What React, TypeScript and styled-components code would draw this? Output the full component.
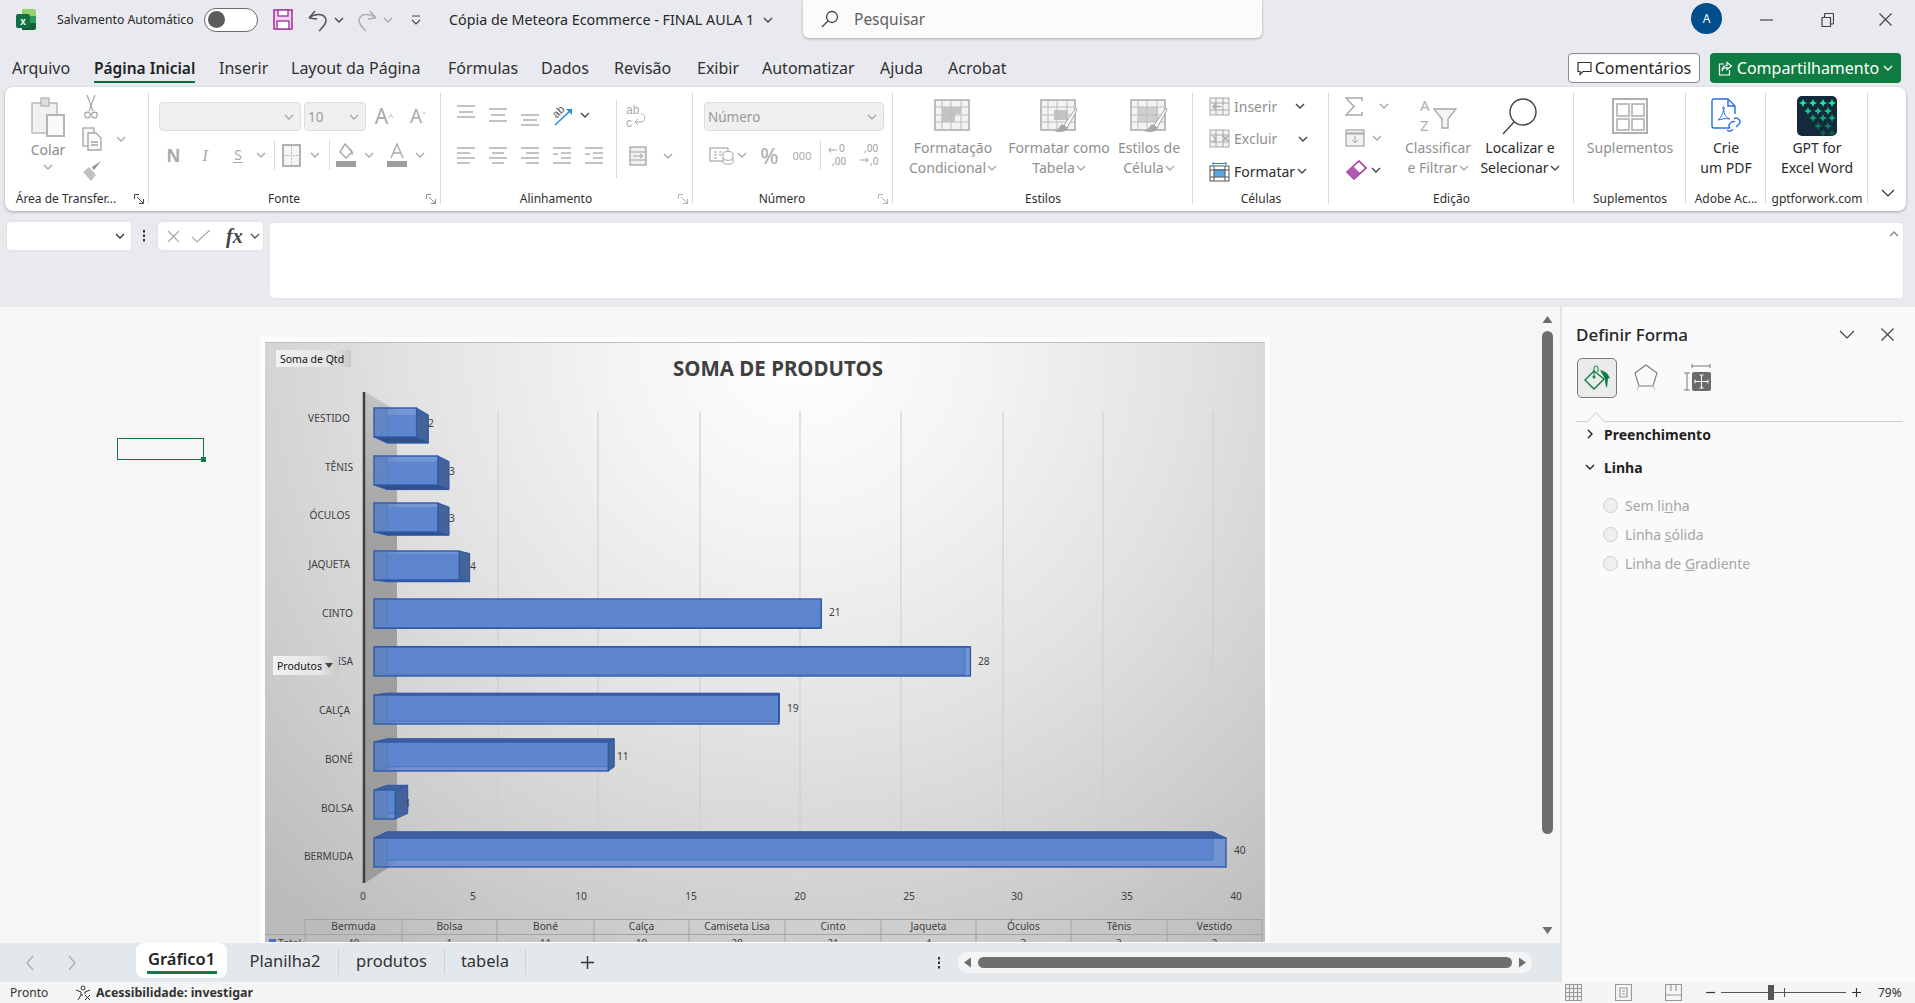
import React from 'react';
import styled, { createGlobalStyle } from 'styled-components';

const G = '#a9a9a9';
const DARK = '#444';
const FONT = `"Noto Sans", "Open Sans", sans-serif`;

const GlobalStyle = createGlobalStyle`
  html, body { margin: 0; padding: 0; background: #e8eaef; }
  body { font-family: ${FONT}; color: #262626; }
  * { box-sizing: border-box; }
`;

const Page = styled.div`
  width: 1915px;
  height: 1003px;
  overflow: hidden;
  display: flex;
  flex-direction: column;
  background: #e8eaef;
`;

/* title bar */
const TitleBar = styled.div`
  height: 39px;
  display: flex;
  align-items: center;
  padding-left: 16px;
  flex: none;
`;
const Slot = styled.span<{ $w?: number; $ml?: number; $c?: string }>`
  display: inline-flex;
  align-items: center;
  justify-content: center;
  flex: none;
  ${p => (p.$w !== undefined ? `width: ${p.$w}px;` : '')}
  margin-left: ${p => p.$ml || 0}px;
  ${p => (p.$c ? `color: ${p.$c};` : '')}
`;
const AutoSave = styled.span`
  margin-left: 21px;
  width: 137px;
  font-size: 12.2px;
  white-space: nowrap;
`;
const Toggle = styled.span`
  margin-left: 10px;
  width: 54px;
  height: 24px;
  border: 1.5px solid #6a6a6a;
  border-radius: 12px;
  background: #fff;
  display: flex;
  align-items: center;
  padding-left: 3px;
  &::before {
    content: '';
    width: 17px;
    height: 17px;
    border-radius: 50%;
    background: #5c5c5c;
  }
`;
const DocTitle = styled.span`
  margin-left: 27px;
  width: 314px;
  font-size: 14.3px;
  white-space: nowrap;
`;
const SearchBox = styled.div`
  margin-left: 30px;
  margin-top: -1px;
  width: 459px;
  height: 38px;
  background: #fbfbfb;
  border-radius: 0 0 6px 6px;
  box-shadow: 0 1px 3px rgba(0, 0, 0, 0.28);
  display: flex;
  align-items: center;
  padding-left: 18px;
  gap: 15px;
  font-size: 15.5px;
  color: #5f5f5f;
`;
const Avatar = styled.span`
  margin-left: 429px;
  width: 31px;
  height: 31px;
  margin-top: -2px;
  border-radius: 50%;
  background: #004e8c;
  color: #fff;
  font-size: 12px;
  display: flex;
  align-items: center;
  justify-content: center;
`;

/* ribbon tabs */
const TabRow = styled.div`
  height: 48px;
  flex: none;
  display: flex;
  align-items: flex-start;
  padding-top: 16px;
  position: relative;
`;
const MenuTab = styled.span<{ $w: number; $active?: boolean }>`
  width: ${p => p.$w}px;
  flex: none;
  height: 28px;
  font-size: ${p => (p.$active ? 15.5 : 16)}px;
  line-height: 27px;
  white-space: nowrap;
  color: #303030;
  ${p => p.$active ? `font-weight: 600; color: #222; border-bottom: 2.5px solid #0e6b3e; ` : ''}
`;
const MenuTabs = styled.div`
  display: flex;
  padding-left: 12px;
  flex: 1;
`;
const Gap = styled.span<{ $w: number }>`
  width: ${p => p.$w}px;
  flex: none;
`;
const CommentBtn = styled.button`
  width: 132px;
  height: 30px;
  margin-top: -2px;
  background: #fff;
  border: 1px solid #8a8a8a;
  border-radius: 4px;
  font: 16px ${FONT};
  color: #262626;
  display: flex;
  align-items: center;
  justify-content: center;
  gap: 3px;
  padding: 0;
  white-space: nowrap;
`;
const ShareBtn = styled.button`
  width: 191px;
  height: 30px;
  margin: -2px 14px 0 10px;
  background: #107c41;
  border: none;
  border-radius: 4px;
  font: 16px ${FONT};
  color: #fff;
  display: flex;
  align-items: center;
  justify-content: center;
  gap: 4px;
  padding: 0;
  white-space: nowrap;
`;

/* ribbon */
const Ribbon = styled.div`
  margin: 0 9px 0 5px;
  height: 124px;
  flex: none;
  padding: 6px 0 1px;
  display: flex;
  background: #fff;
  border-radius: 8px;
  box-shadow: 0 1px 3px rgba(0, 0, 0, 0.3);
`;
const Group = styled.section<{ $w: number }>`
  width: ${p => p.$w}px;
  flex: none;
  display: flex;
  flex-direction: column;
  position: relative;
  &::after {
    content: '';
    position: absolute;
    right: 0;
    top: 0;
    bottom: 6px;
    width: 1px;
    background: #d9d9d9;
  }
`;
const Body = styled.div<{ $pl?: number; $pt?: number }>`
  height: 94px;
  display: flex;
  padding-left: ${p => p.$pl || 0}px;
  padding-top: ${p => p.$pt || 0}px;
`;
const Footer = styled.div`
  flex: 1;
  display: flex;
  align-items: center;
`;
const GroupLabel = styled.span`
  flex: 1;
  text-align: center;
  font-size: 12px;
  white-space: nowrap;
  color: #2f2f2f;
`;
const Launcher = styled.span`
  width: 22px;
  flex: none;
  display: flex;
  justify-content: flex-end;
  padding-right: 5px;
`;
const Col = styled.div<{ $gap?: number; $ml?: number; $w?: number; $pt?: number }>`
  display: flex;
  flex-direction: column;
  gap: ${p => p.$gap || 0}px;
  margin-left: ${p => p.$ml || 0}px;
  padding-top: ${p => p.$pt || 0}px;
  ${p => (p.$w ? `width: ${p.$w}px; flex: none;` : '')}
`;
const Row = styled.div<{ $h?: number; $pl?: number }>`
  display: flex;
  align-items: center;
  ${p => (p.$h ? `height: ${p.$h}px;` : '')}
  padding-left: ${p => p.$pl || 0}px;
`;
const PasteCol = styled.div`
  width: 52px;
  flex: none;
  display: flex;
  flex-direction: column;
  align-items: center;
  padding-top: 4px;
  font-size: 14px;
  line-height: 20px;
  color: #8d8d8d;
  gap: 3px;
`;
const Combo = styled.div<{ $w: number; $ml?: number }>`
  width: ${p => p.$w}px;
  margin-left: ${p => p.$ml || 0}px;
  height: 29px;
  flex: none;
  background: #f0f0f0;
  border: 1px solid #dedede;
  border-radius: 4px;
  display: flex;
  align-items: center;
  justify-content: space-between;
  padding: 0 6px 0 3px;
  font-size: 13.5px;
  color: #9a9a9a;
`;
const Glyph = styled.span<{ $size: number; $bold?: boolean; $italic?: boolean; $serif?: boolean }>`
  font-size: ${p => p.$size}px;
  color: ${G};
  line-height: 1;
  ${p => (p.$bold ? 'font-weight: 700;' : '')}
  ${p => (p.$italic ? 'font-style: italic;' : '')}
  ${p => (p.$serif ? 'font-family: "Liberation Serif", serif;' : '')}
`;
const UnderGlyph = styled(Glyph)`
  border-bottom: 1.5px solid ${G};
  padding: 0 1px;
`;
const VSep = styled.span<{ $h: number; $ml?: number }>`
  width: 1px;
  height: ${p => p.$h}px;
  background: #d9d9d9;
  flex: none;
  margin-left: ${p => p.$ml || 0}px;
`;
const BigBtn = styled.div<{ $w?: number; $ml?: number; $off?: boolean }>`
  ${p => (p.$w ? `width: ${p.$w}px; flex: none;` : 'flex: 1;')}
  margin-left: ${p => p.$ml || 0}px;
  display: flex;
  flex-direction: column;
  align-items: center;
  font-size: 14px;
  line-height: 20px;
  white-space: nowrap;
  color: ${p => (p.$off ? '#8f8f8f' : '#2b2b2b')};
`;
const IconZone = styled.div`
  height: 45px;
  display: flex;
  align-items: center;
  justify-content: center;
`;
const CellText = styled.span<{ $w?: number; $off?: boolean }>`
  ${p => (p.$w ? `width: ${p.$w}px; flex: none;` : '')}
  margin-left: 4px;
  font-size: 14px;
  white-space: nowrap;
  color: ${p => (p.$off ? '#8f8f8f' : '#2b2b2b')};
`;
const CollapseWrap = styled.div`
  flex: 1;
  display: flex;
  align-items: flex-end;
  justify-content: center;
  padding: 0 0 12px 2px;
`;

/* formula bar */
const FormulaBar = styled.div`
  margin-top: 9px;
  height: 87px;
  flex: none;
  display: flex;
  align-items: flex-start;
  padding-left: 6px;
`;
const NameBox = styled.div`
  width: 126px;
  height: 30px;
  margin-top: 1px;
  background: #fff;
  border: 1px solid #e2e2e2;
  border-radius: 4px;
  display: flex;
  align-items: center;
  justify-content: flex-end;
  padding-right: 6px;
`;
const NameDots = styled.span`
  width: 8px;
  height: 30px;
  margin: 1px 0 0 8px;
  flex: none;
  display: flex;
  align-items: center;
  justify-content: center;
`;
const FxBox = styled.div`
  width: 107px;
  height: 30px;
  margin-top: 1px;
  margin-left: 9px;
  background: #fff;
  border: 1px solid #e2e2e2;
  border-radius: 4px;
  display: flex;
  align-items: center;
  padding-left: 9px;
`;
const FxText = styled.span`
  font-family: "Liberation Serif", serif;
  font-style: italic;
  font-weight: 700;
  font-size: 20px;
  color: #444;
`;
const FormulaInput = styled.div`
  width: 1635px;
  height: 77px;
  margin: 2px 0 0 5px;
  background: #fff;
  border: 1px solid #e4e4e4;
  border-radius: 4px;
  display: flex;
  align-items: flex-start;
  justify-content: flex-end;
  padding: 7px 4px 0 0;
`;

/* work area */
const Main = styled.div`
  flex: 1;
  min-height: 0;
  display: flex;
`;
const LeftPane = styled.div`
  width: 1560px;
  flex: none;
  display: flex;
  flex-direction: column;
`;
const Sheet = styled.div`
  flex: 1;
  min-height: 0;
  background: #f6f6f6;
  position: relative;
  overflow: hidden;
  display: flex;
  justify-content: space-between;
  padding: 30px 7px 0 260px;
`;
const SelectedCell = styled.div`
  position: absolute;
  left: 117px;
  top: 131px;
  width: 87px;
  height: 22px;
  border: 1.5px solid #107c41;
  &::after {
    content: '';
    position: absolute;
    right: -3px;
    bottom: -3px;
    width: 5px;
    height: 5px;
    background: #107c41;
  }
`;
const ChartFrame = styled.div`
  width: 1010px;
  flex: none;
  background: #fdfdfd;
  padding: 5px 5px 0;
  position: relative;
  height: 700px;
`;
const ChartSvg = styled.svg`
  display: block;
`;
const PivotBtn = styled.div<{ $l: number; $t: number; $w: number; $h: number }>`
  position: absolute;
  left: ${p => p.$l}px;
  top: ${p => p.$t}px;
  width: ${p => p.$w}px;
  height: ${p => p.$h}px;
  background: linear-gradient(90deg, #f2f2f2, #e4e4e4 70%, #c9c9c9);
  font-size: 10.5px;
  color: #111;
  display: flex;
  align-items: center;
  justify-content: space-between;
  padding: 0 6px 0 4px;
  white-space: nowrap;
`;
const VScroll = styled.div`
  width: 11px;
  flex: none;
  margin-top: -22px;
  height: 620px;
  display: flex;
  flex-direction: column;
  align-items: center;
`;
const VThumb = styled.div`
  width: 11px;
  height: 505px;
  margin: 7px 0 92px;
  border-radius: 6px;
  background: #6e6e6e;
`;

/* sheet tabs */
const SheetTabs = styled.div`
  height: 39px;
  flex: none;
  background: #e3e8ed;
  display: flex;
  align-items: flex-start;
  padding-left: 25px;
  font-size: 16.5px;
  color: #333;
`;
const ActiveTab = styled.div`
  width: 91px;
  height: 35px;
  background: #fff;
  border-radius: 8px;
  margin-left: 59px;
  display: flex;
  flex-direction: column;
  align-items: center;
  font-weight: 600;
  color: #222;
  padding-top: 4px;
`;
const ActiveLine = styled.span`
  width: 70px;
  height: 2.5px;
  background: #107c41;
  margin-top: 1px;
`;
const SheetTab = styled.div<{ $w: number; $ml?: number }>`
  width: ${p => p.$w}px;
  flex: none;
  margin-left: ${p => p.$ml || 0}px;
  margin-top: 6px;
  height: 25px;
  line-height: 24px;
  text-align: center;
  border-right: 1px solid #cfd3d7;
  white-space: nowrap;
`;
const TabNav = styled.div`
  height: 39px;
  display: flex;
  align-items: center;
  flex: none;
`;
const HScroll = styled.div`
  margin: 9px 0 0 17px;
  width: 574px;
  height: 21px;
  background: #f5f5f5;
  border-radius: 10px;
  display: flex;
  align-items: center;
  justify-content: space-between;
  padding: 0 5px;
`;
const HThumb = styled.div`
  width: 534px;
  height: 11px;
  border-radius: 6px;
  background: #6e6e6e;
`;

/* side panel */
const Panel = styled.aside`
  width: 355px;
  flex: none;
  background: #fafafa;
  border-left: 2px solid #e4e4e4;
  padding: 13px 21px 0 14px;
  display: flex;
  flex-direction: column;
`;
const PanelHead = styled.div`
  height: 28px;
  display: flex;
  align-items: center;
  font-size: 17px;
  font-weight: 500;
  color: #262626;
`;
const PanelTitle = styled.span`
  flex: 1;
`;
const PanelIcons = styled.div`
  margin-top: 10px;
  display: flex;
  align-items: center;
  padding-left: 1px;
`;
const ActiveIcon = styled.div`
  width: 40px;
  height: 40px;
  background: #ebebeb;
  border: 1px solid #7a7a7a;
  border-radius: 5px;
  display: flex;
  align-items: center;
  justify-content: center;
`;
const PanelDivider = styled.div`
  margin-top: 7px;
  height: 11px;
  width: 327px;
  flex: none;
`;
const SectionHead = styled.div<{ $mt: number }>`
  margin-top: ${p => p.$mt}px;
  height: 20px;
  display: flex;
  align-items: center;
  font-size: 14px;
  font-weight: 700;
  color: #222;
  padding-left: 9px;
  gap: 9px;
`;
const RadioRow = styled.div<{ $mt: number }>`
  margin-top: ${p => p.$mt}px;
  height: 20px;
  display: flex;
  align-items: center;
  padding-left: 27px;
  gap: 7px;
  font-size: 14px;
  color: #a6a6a6;
`;
const RadioDot = styled.span`
  width: 15px;
  height: 15px;
  border-radius: 50%;
  background: #efefef;
  border: 1px solid #cfcfcf;
`;

/* status bar */
const StatusBar = styled.div`
  height: 21px;
  flex: none;
  background: #f5f5f5;
  display: flex;
  align-items: center;
  padding-left: 10px;
  font-size: 12px;
  color: #333;
`;
const StatusStrong = styled.span`
  font-weight: 700;
  margin-left: 4px;
  width: 158px;
  white-space: nowrap;
  font-size: 12.4px;
`;
const StatusLeft = styled.span`
  width: 65px;
  flex: none;
`;
const ZoomTrack = styled.div`
  width: 125px;
  height: 1px;
  background: #555;
  margin: 0 6px;
  position: relative;
  &::before {
    content: '';
    position: absolute;
    left: 47px;
    top: -7px;
    width: 6px;
    height: 15px;
    background: #555;
  }
  &::after {
    content: '';
    position: absolute;
    left: 63px;
    top: -4px;
    width: 1px;
    height: 9px;
    background: #555;
  }
`;

/* small icons */
const Chev = ({ ml = 0, c = G, dir = 'down' }: { ml?: number; c?: string; dir?: string }) => (
  <Slot $ml={ml} $w={10}>
    <svg width="10" height="8" viewBox="0 0 10 8">
      <polyline
        points={dir === 'up' ? '1,6 5,2 9,6' : '1,2 5,6 9,2'}
        fill="none"
        stroke={c}
        strokeWidth="1.4"
      />
    </svg>
  </Slot>
);

const LineIcon = ({ lines, h = 24, w = 18 }: { lines: number[][]; h?: number; w?: number }) => (
  <svg width={w} height={h}>
    {lines.map(([a, b, y], i) => (
      <line key={i} x1={a} x2={b} y1={y} y2={y} stroke={G} strokeWidth="1.4" />
    ))}
  </svg>
);

const LauncherIcon = ({ c = '#8a8a8a' }: { c?: string }) => (
  <svg width="10" height="10" viewBox="0 0 10 10" fill="none" stroke={c}>
    <path d="M.5 5V.5H5M3 3l6 6M9.500 5v4.500H5" />
  </svg>
);

const ExcelLogo = () => (
  <svg width="20" height="21" viewBox="0 0 20 21">
    <path d="M6 0h12a2 2 0 0 1 2 2v5H6z" fill="#8fd16c" />
    <rect x="6" y="7" width="14" height="7" fill="#2b9b5a" />
    <path d="M6 14h14v5a2 2 0 0 1-2 2H6z" fill="#185c37" />
    <rect x="0" y="5" width="14" height="14" rx="2" fill="#107040" />
    <text x="7" y="16" textAnchor="middle" fontSize="10" fontWeight="700" fill="#fff" fontFamily="Liberation Sans">x</text>
  </svg>
);

const SaveIcon = () => (
  <svg width="20" height="21" viewBox="0 0 20 21">
    <rect x="1" y="1" width="18" height="19" fill="#f3d2ee" stroke="#a2399f" strokeWidth="1.6" />
    <rect x="5" y="1" width="10" height="6" fill="#fff" stroke="#a2399f" strokeWidth="1.4" />
    <rect x="4" y="12" width="12" height="8" fill="#fff" stroke="#a2399f" strokeWidth="1.4" />
  </svg>
);

const UndoIcon = ({ c, flip }: { c: string; flip?: boolean }) => (
  <svg width="20" height="24" viewBox="0 0 20 24" fill="none" stroke={c} strokeWidth="1.5" style={flip ? { transform: 'scaleX(-1)' } : undefined}>
    <path d="M1 10l6-7M1 10l8 1M1 10c6-5 16-5 17 2 .5 4-3 7-7 11" />
  </svg>
);

const PasteIcon = () => (
  <svg width="34" height="40" viewBox="0 0 34 40" fill="none" stroke="#b5b5b5" strokeWidth="1.4">
    <rect x="1" y="6" width="25" height="30" fill="#f1f1f1" />
    <rect x="10" y="1" width="8" height="8" fill="#ddd" />
    <rect x="16" y="18" width="17" height="21" fill="#fafafa" strokeWidth="2" />
  </svg>
);

const CutIcon = () => (
  <svg width="14" height="24" viewBox="0 0 14 24" fill="none" stroke="#a5a5a5" strokeWidth="1.2">
    <path d="M3 0l6 16M11 0L5 16" />
    <circle cx="3.500" cy="20" r="2.800" />
    <circle cx="10.500" cy="20" r="2.800" />
  </svg>
);

const CopyIcon = () => (
  <svg width="20" height="24" viewBox="0 0 20 24" fill="none" stroke="#a5a5a5" strokeWidth="1.3">
    <rect x="1" y="1" width="11" height="18" fill="#fafafa" />
    <path d="M6 6h8l5 5v12H6z" fill="#fafafa" />
    <path d="M9 15h7M9 18h7" />
  </svg>
);

const BrushIcon = () => (
  <svg width="20" height="22" viewBox="0 0 20 22">
    <path d="M1 12l8 9 5-6-7-8z" fill="#c2c2c2" />
    <path d="M12 10l7-9-9 6z" fill="#8e8e8e" />
  </svg>
);

const BorderIcon = () => (
  <svg width="19" height="23" viewBox="0 0 19 23" fill="none">
    <rect x="1" y="1" width="17" height="21" stroke="#9a9a9a" strokeWidth="1.5" fill="#f5f5f5" />
    <path d="M9.500 2v19M2 11.500h15" stroke="#bbb" strokeDasharray="2 1" />
  </svg>
);

const FillIcon = () => (
  <svg width="20" height="24" viewBox="0 0 20 24">
    <path d="M9 1l7 8-6 6-6-6z" fill="none" stroke="#a5a5a5" strokeWidth="1.4" />
    <path d="M14 4l3 6-1 3z" fill="#a5a5a5" />
    <rect x="0" y="18" width="20" height="6" fill="#9e9e9e" />
  </svg>
);

const TextColorIcon = () => (
  <svg width="20" height="24" viewBox="0 0 20 24" fill="none">
    <path d="M4 15L10 1l6 14M6.500 10h7" stroke="#a5a5a5" strokeWidth="1.3" />
    <rect x="0" y="18" width="20" height="6" fill="#9e9e9e" />
  </svg>
);

const OrientIcon = () => (
  <svg width="22" height="24" viewBox="0 0 22 24" fill="none">
    <text x="1" y="13" fontSize="11" fill="#555" transform="rotate(-45 6 10)" fontFamily="Liberation Sans">ab</text>
    <path d="M3 22L19 7" stroke="#2c8fd6" strokeWidth="1.6" />
    <path d="M14 6h6v6z" fill="#2c8fd6" />
  </svg>
);

const WrapIcon = () => (
  <svg width="20" height="24" viewBox="0 0 20 24" fill="none">
    <text x="0" y="10" fontSize="12" fill="#aaa" fontFamily="Liberation Sans">ab</text>
    <text x="0" y="23" fontSize="12" fill="#aaa" fontFamily="Liberation Sans">c</text>
    <path d="M15 10c5 0 5 8 0 8H10M12 15l-3 3 3 3" stroke="#aaa" />
  </svg>
);

const MergeIcon = () => (
  <svg width="18" height="20" viewBox="0 0 18 20" fill="none" stroke="#a5a5a5">
    <rect x="1" y="1" width="16" height="18" fill="#f0f0f0" strokeWidth="1.3" />
    <path d="M1 6h16M1 14h16M4 10h10M11 8l2.500 2-2.500 2" />
  </svg>
);

const AccountingIcon = () => (
  <svg width="26" height="20" viewBox="0 0 26 20" fill="none" stroke="#a5a5a5">
    <rect x="1" y="3" width="18" height="13" strokeWidth="1.2" />
    <path d="M5 7h3M5 10h3M5 13h3M10 7h3M10 10h3" />
    <ellipse cx="19" cy="9" rx="5" ry="2.500" fill="#fff" />
    <path d="M14 9v8c0 3 10 3 10 0V9M14 13c0 3 10 3 10 0" fill="#fff" />
  </svg>
);

const DecimalIcon = ({ inc }: { inc?: boolean }) => (
  <svg width="20" height="26" viewBox="0 0 20 26" fill="none">
    <text x={inc ? 11 : 5} y="10" fontSize="10" fill="#a0a0a0" fontFamily="Noto Sans">{inc ? '0' : ',00'}</text>
    <text x={inc ? 4 : 11} y="23" fontSize="10" fill="#a0a0a0" fontFamily="Noto Sans">{inc ? ',00' : ',0'}</text>
    <path d={inc ? 'M1 8h8M3 5.500L1 8l2 2.500' : 'M1 18h8M7 15.500L9 18l-2 2.500'} stroke="#a0a0a0" />
  </svg>
);

const StyleGrid = ({ variant, brush }: { variant: number; brush?: boolean }) => (
  <svg width="38" height="34" viewBox="0 0 38 34" fill="none">
    <rect x="1" y="1" width="34" height="30" stroke="#a8a8a8" strokeWidth="1.5" fill="#f3f3f3" />
    {variant === 0 && <path d="M8 8h13v8h-9v7h-4zM21 8h6v7h-6zM12 16h9v7h-9z" fill="#c4c4c4" />}
    {variant === 1 && <path d="M14 11h14v10H14z" fill="#c4c4c4" />}
    {variant === 2 && <path d="M8 8h20v15H8z" fill="#cfcfcf" />}
    <path d="M1 8h34M1 23h34M8 1v30M27 1v30M1 16h34M17 1v30" stroke="#bdbdbd" />
    {brush && (
      <>
        <path d="M36 9L24 26l3 3L37 11z" fill="#fff" stroke="#a0a0a0" />
        <path d="M22 25c-2 2-4 6-8 7 6 2 12 1 14-3z" fill="#a8a8a8" />
      </>
    )}
  </svg>
);

const CellIcon = ({ kind }: { kind: string }) => {
  if (kind === 'fmt') {
    return (
      <svg width="21" height="21" viewBox="0 0 21 21" fill="none">
        <path d="M4 1v3M17 1v3M4 2.500h13" stroke="#2c7fd0" />
        <rect x="1" y="5" width="19" height="15" stroke="#555" fill="#fff" />
        <rect x="5" y="8" width="11" height="8" fill="#5aa7e4" />
        <path d="M1 9h19M1 16h19M5 5v15M16 5v15" stroke="#555" />
      </svg>
    );
  }
  return (
    <svg width="21" height="19" viewBox="0 0 21 19" fill="none" stroke="#a8a8a8">
      <rect x="1" y="1" width="19" height="17" fill="#f2f2f2" />
      <path d="M1 6h19M1 13h19M7 1v17M14 1v17" />
      {kind === 'ins' ? <path d="M12 9.500H4M7 6.500L4 9.500l3 3" strokeWidth="1.3" /> : <path d="M4 7l3 3-3 3M14 7l5 5M19 7l-5 5" strokeWidth="1.3" />}
    </svg>
  );
};

const SigmaIcon = () => (
  <svg width="18" height="19" viewBox="0 0 18 19" fill="none" stroke={G} strokeWidth="1.5">
    <path d="M17 4V1H1l8 8.500L1 18h16v-3" />
  </svg>
);
const FillDownIcon = () => (
  <svg width="20" height="18" viewBox="0 0 20 18" fill="none" stroke={G}>
    <rect x="1" y="1" width="18" height="16" fill="#f2f2f2" strokeWidth="1.3" />
    <path d="M1 4.500h18" strokeWidth="2" />
    <path d="M10 7v7M7 11l3 3 3-3" />
  </svg>
);
const EraserIcon = () => (
  <svg width="22" height="20" viewBox="0 0 22 20" fill="none">
    <path d="M14 1l7 7-12 11-7-7z" fill="#fff" stroke="#a2399f" strokeWidth="1.6" />
    <path d="M2 12l6-6 7 7-6 6z" fill="#b558b2" />
  </svg>
);
const SortIcon = () => (
  <svg width="38" height="36" viewBox="0 0 38 36" fill="none">
    <text x="1" y="13" fontSize="15" fill="#b0b0b0" fontFamily="Noto Sans">A</text>
    <text x="1" y="33" fontSize="15" fill="#b0b0b0" fontFamily="Noto Sans">Z</text>
    <path d="M15 11h22l-8 10v9h-6v-9z" fill="#f5f5f5" stroke="#a8a8a8" strokeWidth="1.4" />
  </svg>
);
const LensIcon = () => (
  <svg width="36" height="38" viewBox="0 0 36 38" fill="none" stroke="#444" strokeWidth="1.4">
    <circle cx="21" cy="15" r="13" />
    <path d="M12 25L1 37" />
  </svg>
);
const AddinIcon = () => (
  <svg width="36" height="36" viewBox="0 0 36 36" fill="none" stroke="#b0b0b0" strokeWidth="1.6">
    <rect x="1" y="1" width="34" height="34" strokeWidth="2" />
    <rect x="5" y="6" width="12" height="12" />
    <rect x="20" y="6" width="12" height="12" />
    <rect x="5" y="21" width="12" height="11" />
    <rect x="20" y="21" width="12" height="11" />
  </svg>
);
const PdfIcon = () => (
  <svg width="32" height="36" viewBox="0 0 32 36" fill="none" stroke="#2a6fe0" strokeWidth="1.4">
    <path d="M20 30H4a2 2 0 0 1-2-2V3a2 2 0 0 1 2-2h14l7 7v8" />
    <path d="M18 1v7h7" />
    <path d="M8 22c4-3 6-8 5-12-1-2 2-2 1 1-1 5 3 9 6 10-4-1-8 0-12 1z" strokeWidth="1" />
    <path d="M20 30c-3-3 2-8 5-6M24 21c3-3 8 2 5 5l-3 3" />
    <path d="M23 31c-1 2-4 3-6 1" />
  </svg>
);
const GptIcon = () => {
  const dots: React.ReactNode[] = [];
  [
    [6, 7, '#1de9a0'], [16, 7, '#1de9a0'], [26, 7, '#1de9a0'], [35, 7, '#1de9a0'],
    [11, 15, '#18c98c'], [21, 15, '#18c98c'], [31, 15, '#18c98c'],
    [16, 22, '#12a574'], [26, 22, '#12a574'], [35, 22, '#12a574'],
    [21, 30, '#0d7d5b'], [31, 30, '#0d7d5b'], [26, 37, '#0a6049'], [35, 37, '#0a6049'],
  ].forEach(([x, y, c], i) => {
    const a = x as number;
    const b = y as number;
    dots.push(<path key={i} d={`M${a} ${b - 4}l1.200 2.800 2.800 1.200-2.800 1.200-1.200 2.800-1.200-2.800-2.800-1.200 2.800-1.200z`} fill={c as string} />);
  });
  return (
    <svg width="40" height="40" viewBox="0 0 40 40">
      <rect width="40" height="40" rx="5" fill="#14293c" />
      {dots}
    </svg>
  );
};
const A11yIcon = () => (
  <svg width="17" height="16" viewBox="0 0 17 16" fill="none" stroke="#333" strokeWidth="1">
    <circle cx="8" cy="3" r="2" />
    <path d="M1 5l5 2v3l-3 5M15 5l-5 2v2M6 10h2" />
    <path d="M10 10l5 5M15 10l-5 5" />
  </svg>
);

/* chart */
const BARS = [
  { name: 'VESTIDO', v: 2, y: 408, ly: 418, lx: 350, dx: 428, dy: 423 },
  { name: 'TÊNIS', v: 3, y: 456, ly: 467, lx: 353, dx: 449, dy: 471 },
  { name: 'ÓCULOS', v: 3, y: 503, ly: 515, lx: 350, dx: 449, dy: 518 },
  { name: 'JAQUETA', v: 4, y: 551, ly: 564, lx: 350, dx: 470, dy: 566 },
  { name: 'CINTO', v: 21, y: 599, ly: 613, lx: 353, dx: 829, dy: 612 },
  { name: 'CAMISETA LISA', v: 28, y: 647, ly: 661, lx: 353, dx: 978, dy: 661 },
  { name: 'CALÇA', v: 19, y: 695, ly: 710, lx: 350, dx: 787, dy: 708 },
  { name: 'BONÉ', v: 11, y: 742, ly: 759, lx: 353, dx: 617, dy: 756 },
  { name: 'BOLSA', v: 1, y: 790, ly: 808, lx: 353, dx: 405, dy: 803 },
  { name: 'BERMUDA', v: 40, y: 838, ly: 856, lx: 353, dx: 1234, dy: 850 },
];
const VX = 800;
const VY = 635;
const S = 0.9695;
const toBack = (x: number, y: number): [number, number] => [VX + (x - VX) * S, VY + (y - VY) * S];

const Bar = ({ v, y }: { v: number; y: number }) => {
  const x0 = 374;
  const x1 = x0 + v * 21.3;
  const h = 29;
  const [bx0, by0] = toBack(x0, y);
  const [bx1, by1] = toBack(x1, y + h);
  const pts = (a: number[][]) => a.map(p => p.join(',')).join(' ');
  return (
    <g>
      <rect x={bx0} y={by0} width={bx1 - bx0} height={by1 - by0} fill="#4a72bc" />
      {bx1 > x1 && <polygon points={pts([[x1, y], [bx1, by0], [bx1, by1], [x1, y + h]])} fill="#44639b" stroke="#2f5aa8" />}
      {by0 < y && <polygon points={pts([[x0, y], [bx0, by0], [bx1, by0], [x1, y]])} fill="#3f5f9e" stroke="#2f5aa8" />}
      {by1 > y + h && <polygon points={pts([[x0, y + h], [bx0, by1], [bx1, by1], [x1, y + h]])} fill="#314f8a" stroke="#2f5aa8" />}
      <rect x={x0} y={y} width={x1 - x0} height={h} fill="#6189d2" fillOpacity="0.85" stroke="#2f5aa8" strokeWidth="1.4" />
      <rect x={x0 + 1} y={y + 1} width={bx0 - x0} height={h - 2} fill="#34589c" fillOpacity="0.2" />
      <polyline points={pts([[bx0, by1], [bx1, by1], [bx1, by0]])} fill="none" stroke="#2f5aa8" strokeOpacity="0.45" />
    </g>
  );
};

const GRID = [498, 598, 700, 800, 901, 1003, 1103, 1213];
const TICKS = [363, 473, 581, 691, 800, 909, 1017, 1127, 1236];
const COLS = [305, 402, 497, 594, 689, 785, 881, 976, 1071, 1167, 1262];
const HEAD = ['Bermuda', 'Bolsa', 'Boné', 'Calça', 'Camiseta Lisa', 'Cinto', 'Jaqueta', 'Óculos', 'Tênis', 'Vestido'];
const VALUES = [40, 1, 11, 19, 28, 21, 4, 3, 3, 2];

const Chart = () => (
  <ChartSvg width="1000" height="600" viewBox="265 342 1000 600" fontFamily="Noto Sans" fill="#404040">
    <defs>
      <radialGradient id="chartBg" gradientUnits="userSpaceOnUse" cx="800" cy="345" r="760">
        <stop offset="0" stopColor="#ffffff" />
        <stop offset="0.24" stopColor="#f4f4f4" />
        <stop offset="0.52" stopColor="#e2e2e2" />
        <stop offset="0.76" stopColor="#cfcfcf" />
        <stop offset="1" stopColor="#bbbbbb" />
      </radialGradient>
      <linearGradient id="wall" x1="0" x2="0" y1="0" y2="1">
        <stop offset="0" stopColor="#c4c4c4" />
        <stop offset="0.3" stopColor="#a0a0a0" />
        <stop offset="1" stopColor="#9c9c9c" />
      </linearGradient>
    </defs>
    <rect x="265" y="342" width="1000" height="600" fill="url(#chartBg)" />
    <line x1="265" x2="1265" y1="342.500" y2="342.500" stroke="#bdbdbd" />
    <text x="778" y="376" textAnchor="middle" fontSize="20.500" fontWeight="700">SOMA DE PRODUTOS</text>
    {GRID.map(x => (
      <line key={x} x1={x} x2={x} y1={411} y2={862} stroke="#cfcfcf" strokeWidth="1.5" strokeOpacity="0.7" />
    ))}
    {GRID.map((x, i) => (
      <line key={x} x1={x} x2={TICKS[i + 1]} y1={868} y2={881} stroke="#fff" strokeOpacity="0.15" />
    ))}
    <polygon points="365,392 397,411 397,862 365,883" fill="url(#wall)" />
    <line x1="364" x2="364" y1="392" y2="883" stroke="#404040" strokeWidth="2.500" />
    {BARS.map(b => (
      <Bar key={b.name} v={b.v} y={b.y} />
    ))}
    <g fontSize="10.200">
      {BARS.map(b => (
        <text key={b.name} x={b.lx} y={b.ly + 4} textAnchor="end">{b.name}</text>
      ))}
      {BARS.map(b => (
        <text key={b.name} x={b.dx} y={b.dy + 4}>{b.v}</text>
      ))}
      {TICKS.map((x, i) => (
        <text key={x} x={x} y={900} textAnchor="middle">{i * 5}</text>
      ))}
      <g stroke="#a3a3a3" strokeWidth="1">
        <line x1={COLS[0]} x2={1262} y1={919.500} y2={919.500} />
        <line x1="265" x2={1262} y1={934.500} y2={934.500} />
        {COLS.map(x => (
          <line key={x} x1={x} x2={x} y1={919} y2={942} />
        ))}
      </g>
      {HEAD.map((t, i) => (
        <text key={t} x={(COLS[i] + COLS[i + 1]) / 2} y={930} textAnchor="middle">{t}</text>
      ))}
      {VALUES.map((t, i) => (
        <text key={i} x={(COLS[i] + COLS[i + 1]) / 2} y={946.500} textAnchor="middle">{t}</text>
      ))}
      <rect x="269" y="939" width="7" height="7" fill="#4472c4" />
      <text x="278" y="946.500">Total</text>
    </g>
  </ChartSvg>
);

const ArrowTri = ({ dir }: { dir: string }) => {
  const map: Record<string, string> = {
    up: '0,8 5,1 10,8',
    down: '0,1 10,1 5,8',
    left: '8,0 8,10 1,5',
    right: '1,0 1,10 8,5',
  };
  return (
    <svg width={dir === 'up' || dir === 'down' ? 11 : 9} height={dir === 'up' || dir === 'down' ? 9 : 11} viewBox={dir === 'up' || dir === 'down' ? '0 0 10 9' : '0 0 9 10'}>
      <polygon points={map[dir]} fill="#6e6e6e" />
    </svg>
  );
};

const THin = ({ d, w = 16, h = 16, c = '#444', sw = 1.2 }: { d: string; w?: number; h?: number; c?: string; sw?: number }) => (
  <svg width={w} height={h} viewBox={`0 0 ${w} ${h}`} fill="none" stroke={c} strokeWidth={sw}>
    <path d={d} />
  </svg>
);

export default function App() {
  return (
    <Page>
      <GlobalStyle />

      <TitleBar>
        <ExcelLogo />
        <AutoSave>Salvamento Automático</AutoSave>
        <Toggle />
        <Slot $ml={15}><SaveIcon /></Slot>
        <Slot $ml={15}><UndoIcon c="#555" /></Slot>
        <Chev ml={6} c={DARK} />
        <Slot $ml={13}><UndoIcon c="#b0b0b0" flip /></Slot>
        <Chev ml={6} />
        <Slot $ml={17} $w={12}><THin w={12} h={12} d="M2 2h8M2 6l4 4 4-4" /></Slot>
        <DocTitle>Cópia de Meteora Ecommerce - FINAL AULA 1</DocTitle>
        <Chev c={DARK} />
        <SearchBox>
          <THin w={18} h={18} sw={1.3} d="M11 1.500a5.500 5.500 0 1 1 0 11 5.500 5.500 0 0 1 0-11zM7 11l-6 6" />
          <span>Pesquisar</span>
        </SearchBox>
        <Avatar>A</Avatar>
        <Slot $ml={38}><THin w={13} h={4} d="M0 2h13" /></Slot>
        <Slot $ml={48}><THin w={13} h={14} d="M1 4.500h8.500v9H1zM3.500 4.500V1.500a1 1 0 0 1 1-1h7a1 1 0 0 1 1 1V10a1 1 0 0 1-1 1H9.500" /></Slot>
        <Slot $ml={45}><THin w={13} h={13} d="M.5.500l12 12M12.500.500l-12 12" /></Slot>
      </TitleBar>

      <TabRow>
        <MenuTabs>
          <MenuTab $w={82}>Arquivo</MenuTab>
          <MenuTab $w={101} $active>Página Inicial</MenuTab>
          <Gap $w={24} />
          <MenuTab $w={72}>Inserir</MenuTab>
          <MenuTab $w={157}>Layout da Página</MenuTab>
          <MenuTab $w={93}>Fórmulas</MenuTab>
          <MenuTab $w={73}>Dados</MenuTab>
          <MenuTab $w={83}>Revisão</MenuTab>
          <MenuTab $w={65}>Exibir</MenuTab>
          <MenuTab $w={118}>Automatizar</MenuTab>
          <MenuTab $w={68}>Ajuda</MenuTab>
          <MenuTab $w={60}>Acrobat</MenuTab>
        </MenuTabs>
        <CommentBtn>
          <THin w={15} h={15} c="#333" d="M1 1.500h13v9H6l-3 3v-3H1z" />
          Comentários
        </CommentBtn>
        <ShareBtn>
          <THin w={15} h={15} c="#fff" d="M9 1.500l4.500 3.500L9 8.500V6.500C6 6.500 4.500 8 4 10c0-3.500 2-5.500 5-5.500zM6 3H1.500v11h10V9" />
          Compartilhamento
          <Chev c="#fff" />
        </ShareBtn>
      </TabRow>

      <Ribbon>
        <Group $w={144}>
          <Body $pl={17}>
            <PasteCol>
              <PasteIcon />
              <span>Colar</span>
              <Chev />
            </PasteCol>
            <Col $ml={8} $gap={6} $pt={1}>
              <Row $h={26} $pl={2}><CutIcon /></Row>
              <Row $h={26}><CopyIcon /><Chev ml={14} /></Row>
              <Row $h={26}><BrushIcon /></Row>
            </Col>
          </Body>
          <Footer>
            <GroupLabel>Área de Transfer...</GroupLabel>
            <Launcher><LauncherIcon c="#444" /></Launcher>
          </Footer>
        </Group>

        <Group $w={292}>
          <Body $pl={10} $pt={9}>
            <Col $gap={9}>
              <Row $h={29}>
                <Combo $w={142}><span /><Chev /></Combo>
                <Combo $w={62} $ml={3}>10<Chev /></Combo>
                <Slot $ml={8} $w={20}><Glyph $size={21}>A</Glyph><Glyph $size={9}>^</Glyph></Slot>
                <Slot $ml={14} $w={20}><Glyph $size={19}>A</Glyph><Glyph $size={9}>ˇ</Glyph></Slot>
              </Row>
              <Row $h={30} $pl={8}>
                <Slot $w={13}><Glyph $size={17} $bold>N</Glyph></Slot>
                <Slot $ml={20} $w={10}><Glyph $size={17} $italic $serif>I</Glyph></Slot>
                <Slot $ml={23} $w={10}><UnderGlyph $size={14}>S</UnderGlyph></Slot>
                <Chev ml={13} />
                <VSep $h={30} $ml={8} />
                <Slot $ml={7} $w={19}><BorderIcon /></Slot>
                <Chev ml={9} />
                <VSep $h={30} $ml={9} />
                <Slot $ml={6} $w={20}><FillIcon /></Slot>
                <Chev ml={8} />
                <Slot $ml={13} $w={20}><TextColorIcon /></Slot>
                <Chev ml={8} />
              </Row>
            </Col>
          </Body>
          <Footer>
            <GroupLabel>Fonte</GroupLabel>
            <Launcher><LauncherIcon /></Launcher>
          </Footer>
        </Group>

        <Group $w={252}>
          <Body $pl={16} $pt={7}>
            <Col $gap={17} $w={159} $pt={3}>
              <Row $h={24}>
                <LineIcon lines={[[0, 18, 3], [2, 16, 9], [0, 18, 14]]} />
                <Slot $ml={14}><LineIcon lines={[[0, 18, 6], [2, 16, 12], [0, 18, 18]]} /></Slot>
                <Slot $ml={14}><LineIcon lines={[[0, 18, 12], [2, 16, 17], [0, 18, 22]]} /></Slot>
                <Slot $ml={13}><OrientIcon /></Slot>
                <Chev ml={6} c={DARK} />
              </Row>
              <Row $h={22}>
                <LineIcon h={22} lines={[[0, 18, 4], [0, 13, 9], [0, 18, 14], [0, 13, 19]]} />
                <Slot $ml={14}><LineIcon h={22} lines={[[0, 18, 4], [3, 15, 9], [0, 18, 14], [3, 15, 19]]} /></Slot>
                <Slot $ml={14}><LineIcon h={22} lines={[[0, 18, 4], [5, 18, 9], [0, 18, 14], [5, 18, 19]]} /></Slot>
                <Slot $ml={14}><LineIcon h={22} lines={[[0, 18, 4], [8, 18, 9], [0, 5, 10], [8, 18, 14], [0, 18, 19]]} /></Slot>
                <Slot $ml={14}><LineIcon h={22} lines={[[0, 18, 4], [8, 18, 9], [0, 5, 10], [8, 18, 14], [0, 18, 19]]} /></Slot>
              </Row>
            </Col>
            <VSep $h={78} />
            <Col $gap={17} $ml={9} $pt={4}>
              <Row $h={24}><WrapIcon /></Row>
              <Row $h={22} $pl={3}><MergeIcon /><Chev ml={16} /></Row>
            </Col>
          </Body>
          <Footer>
            <GroupLabel>Alinhamento</GroupLabel>
            <Launcher><LauncherIcon c="#b0b0b0" /></Launcher>
          </Footer>
        </Group>

        <Group $w={200}>
          <Body $pl={11} $pt={9}>
            <Col $gap={9}>
              <Row $h={29}>
                <Combo $w={180}>Número<Chev /></Combo>
              </Row>
              <Row $h={30} $pl={5}>
                <Slot $w={26}><AccountingIcon /></Slot>
                <Chev ml={2} />
                <Slot $ml={13} $w={19}><Glyph $size={22}>%</Glyph></Slot>
                <Slot $ml={13} $w={20}><Glyph $size={11}>000</Glyph></Slot>
                <VSep $h={30} $ml={8} />
                <Slot $ml={7} $w={20}><DecimalIcon inc /></Slot>
                <Slot $ml={11} $w={20}><DecimalIcon /></Slot>
              </Row>
            </Col>
          </Body>
          <Footer>
            <GroupLabel>Número</GroupLabel>
            <Launcher><LauncherIcon c="#b0b0b0" /></Launcher>
          </Footer>
        </Group>

        <Group $w={300}>
          <Body $pl={12}>
            <BigBtn $w={96} $off>
              <IconZone><StyleGrid variant={0} /></IconZone>
              <span>Formatação</span>
              <Row>Condicional<Chev ml={1} /></Row>
            </BigBtn>
            <BigBtn $w={108} $ml={4} $off>
              <IconZone><StyleGrid variant={1} brush /></IconZone>
              <span>Formatar como</span>
              <Row>Tabela<Chev ml={1} /></Row>
            </BigBtn>
            <BigBtn $w={64} $ml={4} $off>
              <IconZone><StyleGrid variant={2} brush /></IconZone>
              <span>Estilos de</span>
              <Row>Célula<Chev ml={1} /></Row>
            </BigBtn>
          </Body>
          <Footer>
            <GroupLabel>Estilos</GroupLabel>
          </Footer>
        </Group>

        <Group $w={136}>
          <Body $pl={16}>
            <Col $gap={6.5}>
              <Row $h={26}><CellIcon kind="ins" /><CellText $w={61} $off>Inserir</CellText><Chev c={DARK} /></Row>
              <Row $h={26}><CellIcon kind="del" /><CellText $w={64} $off>Excluir</CellText><Chev c={DARK} /></Row>
              <Row $h={26}><CellIcon kind="fmt" /><CellText>Formatar</CellText><Chev ml={2} c={DARK} /></Row>
            </Col>
          </Body>
          <Footer>
            <GroupLabel>Células</GroupLabel>
          </Footer>
        </Group>

        <Group $w={245}>
          <Body $pl={16}>
            <Col $gap={12} $w={55} $pt={3}>
              <Row $h={20}><SigmaIcon /><Chev ml={16} /></Row>
              <Row $h={20}><FillDownIcon /><Chev ml={7} /></Row>
              <Row $h={20}><EraserIcon /><Chev ml={4} c={DARK} /></Row>
            </Col>
            <BigBtn $w={76} $off>
              <IconZone><SortIcon /></IconZone>
              <span>Classificar</span>
              <Row>e Filtrar<Chev ml={1} /></Row>
            </BigBtn>
            <BigBtn $w={84} $ml={2}>
              <IconZone><LensIcon /></IconZone>
              <span>Localizar e</span>
              <Row>Selecionar<Chev ml={1} c={DARK} /></Row>
            </BigBtn>
          </Body>
          <Footer>
            <GroupLabel>Edição</GroupLabel>
          </Footer>
        </Group>

        <Group $w={112}>
          <Body>
            <BigBtn $off>
              <IconZone><AddinIcon /></IconZone>
              <span>Suplementos</span>
            </BigBtn>
          </Body>
          <Footer>
            <GroupLabel>Suplementos</GroupLabel>
          </Footer>
        </Group>

        <Group $w={80}>
          <Body>
            <BigBtn>
              <IconZone><PdfIcon /></IconZone>
              <span>Crie</span>
              <span>um PDF</span>
            </BigBtn>
          </Body>
          <Footer>
            <GroupLabel>Adobe Ac...</GroupLabel>
          </Footer>
        </Group>

        <Group $w={102}>
          <Body>
            <BigBtn>
              <IconZone><GptIcon /></IconZone>
              <span>GPT for</span>
              <span>Excel Word</span>
            </BigBtn>
          </Body>
          <Footer>
            <GroupLabel>gptforwork.com</GroupLabel>
          </Footer>
        </Group>

        <CollapseWrap>
          <THin w={14} h={9} c="#333" d="M1 1l6 6 6-6" />
        </CollapseWrap>
      </Ribbon>

      <FormulaBar>
        <NameBox><Chev c="#333" /></NameBox>
        <NameDots><THin w={4} h={14} c="#333" sw={2} d="M2 1v2.500M2 5.500V8M2 10v2.500" /></NameDots>
        <FxBox>
          <THin w={13} h={13} c="#aaa" d="M1 1l11 11M12 1L1 12" />
          <Slot $ml={11}><THin w={20} h={14} c="#aaa" d="M1 8l5 5L19 1" /></Slot>
          <Slot $ml={15}><FxText>fx</FxText></Slot>
          <Chev ml={7} c="#555" />
        </FxBox>
        <FormulaInput><Chev c="#888" dir="up" /></FormulaInput>
      </FormulaBar>

      <Main>
        <LeftPane>
          <Sheet>
            <SelectedCell />
            <ChartFrame>
              <Chart />
              <PivotBtn $l={16} $t={13} $w={75} $h={17}>Soma de Qtd</PivotBtn>
              <PivotBtn $l={13} $t={319} $w={66} $h={19}>
                Produtos
                <svg width="8" height="5"><polygon points="0,0 8,0 4,5" fill="#444" /></svg>
              </PivotBtn>
            </ChartFrame>
            <VScroll>
              <ArrowTri dir="up" />
              <VThumb />
              <ArrowTri dir="down" />
            </VScroll>
          </Sheet>
          <SheetTabs>
            <TabNav>
              <THin w={10} h={16} c="#aaa" d="M8 1L2 8l6 7" />
              <Slot $ml={32}><THin w={10} h={16} c="#aaa" d="M2 1l6 7-6 7" /></Slot>
            </TabNav>
            <ActiveTab>
              Gráfico1
              <ActiveLine />
            </ActiveTab>
            <SheetTab $w={107} $ml={5}>Planilha2</SheetTab>
            <SheetTab $w={106}>produtos</SheetTab>
            <SheetTab $w={81}>tabela</SheetTab>
            <TabNav>
              <Slot $ml={54}><THin w={15} h={15} c="#333" sw={1.4} d="M7.500 1v13M1 7.500h13" /></Slot>
            </TabNav>
            <TabNav>
              <Slot $ml={342}><THin w={4} h={14} c="#333" sw={2} d="M2 1v2.500M2 5.500V8M2 10v2.500" /></Slot>
            </TabNav>
            <HScroll>
              <ArrowTri dir="left" />
              <HThumb />
              <ArrowTri dir="right" />
            </HScroll>
          </SheetTabs>
        </LeftPane>

        <Panel>
          <PanelHead>
            <PanelTitle>Definir Forma</PanelTitle>
            <THin w={16} h={9} d="M1 1l7 7 7-7" />
            <Slot $ml={26}><THin w={13} h={13} d="M.5.500l12 12M12.500.500l-12 12" /></Slot>
          </PanelHead>
          <PanelIcons>
            <ActiveIcon>
              <svg width="28" height="28" viewBox="0 0 28 28" fill="none">
                <path d="M11 7L2 16l9 9 10-10z" stroke="#107c41" strokeWidth="1.4" />
                <path d="M11 13V4a2 2 0 0 1 4 0v4" stroke="#107c41" />
                <circle cx="11" cy="13" r="1.500" fill="#107c41" />
                <path d="M17 6c5 1 9 4 10 9l-2-1-1 10c-2-3-2-7-2-9z" fill="#107c41" />
              </svg>
            </ActiveIcon>
            <Slot $ml={16}>
              <svg width="26" height="28" viewBox="0 0 26 28" fill="none" stroke="#7a7a7a" strokeWidth="1.1">
                <path d="M13 1l11 8-4 13H6L2 9z" />
                <path d="M6 22l-2 4M20 22l2 4" stroke="#c4c4c4" />
              </svg>
            </Slot>
            <Slot $ml={24}>
              <svg width="28" height="28" viewBox="0 0 28 28" fill="none">
                <path d="M9 2h18M9 0v4M27 0v4" stroke="#7a7a7a" />
                <path d="M1 9h6M1 26h6M4 9v17" stroke="#7a7a7a" />
                <rect x="9" y="8" width="19" height="19" rx="2" fill="#6a6a6a" />
                <path d="M18.500 11v13M12 17.500h13" stroke="#fff" />
                <path d="M12 15.500v4M25 15.500v4M16.500 11h4M16.500 24h4" stroke="#fff" />
              </svg>
            </Slot>
          </PanelIcons>
          <PanelDivider>
            <svg width="327" height="11" viewBox="0 0 327 11" fill="none" stroke="#cfcfcf">
              <path d="M0 10.500h12l8-9 8 9h299" />
            </svg>
          </PanelDivider>
          <SectionHead $mt={8}>
            <THin w={10} h={10} c="#222" sw={1.4} d="M3 1l4 4-4 4" />
            <span>Preenchimento</span>
          </SectionHead>
          <SectionHead $mt={13}>
            <THin w={10} h={6} c="#222" sw={1.4} d="M1 1l4 4 4-4" />
            <span>Linha</span>
          </SectionHead>
          <RadioRow $mt={18}>
            <RadioDot />
            <span>Sem li<u>n</u>ha</span>
          </RadioRow>
          <RadioRow $mt={9}>
            <RadioDot />
            <span>Linha <u>s</u>ólida</span>
          </RadioRow>
          <RadioRow $mt={9}>
            <RadioDot />
            <span>Linha de <u>G</u>radiente</span>
          </RadioRow>
        </Panel>
      </Main>

      <StatusBar>
        <StatusLeft>Pronto</StatusLeft>
        <A11yIcon />
        <StatusStrong>Acessibilidade: investigar</StatusStrong>
        <Slot $ml={1311}>
          <THin w={17} h={17} c="#999" d="M.5.500h16v16H.500zM.5 4.500h16M.5 8.500h16M.5 12.500h16M4.500.500v16M8.500.500v16M12.500.500v16" />
        </Slot>
        <Slot $ml={33}>
          <THin w={17} h={17} c="#999" d="M.5.500h16v16H.500zM5 4h7v9H5zM7 7h3M7 10h3" />
        </Slot>
        <Slot $ml={33}>
          <THin w={17} h={17} c="#999" d="M.5.500h16v16H.500zM.5 11h16M6 .500V7M11 .500V7" />
        </Slot>
        <Slot $ml={24}><THin w={9} h={3} c="#333" d="M0 1.500h9" /></Slot>
        <ZoomTrack />
        <THin w={9} h={9} c="#333" d="M4.500 0v9M0 4.500h9" />
        <Slot $ml={17}>79%</Slot>
      </StatusBar>
    </Page>
  );
}
